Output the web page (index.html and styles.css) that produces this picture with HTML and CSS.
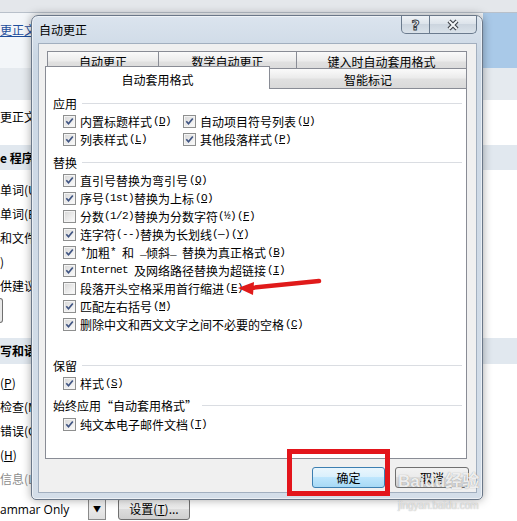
FILE: index.html
```html
<!DOCTYPE html>
<html lang="zh-CN">
<head>
  <meta charset="UTF-8">
  <title>自动更正</title>
  <link rel="stylesheet" href="styles.css">
</head>
<body>
  <!-- 背后的 Word 选项窗口（只露出左边一条） -->
  <div class="bg">
    <div class="bg-top"></div>
    <div class="bg-head"><span class="frag bg-link">更正文本和设置其格式的方式</span></div>
    <div class="bg-bar"></div>
    <div class="bg-intro"><span class="frag">更正文本时</span></div>
    <div class="bg-band b1"><span class="frag">e 程序中更正拼写时</span></div>
    <div class="bg-list">
      <div class="bg-line"><span class="frag">单词(U)</span></div>
      <div class="bg-line"><span class="frag">单词(B)</span></div>
      <div class="bg-line"><span class="frag">和文件地址(F)</span></div>
      <div class="bg-line"><span class="frag">)</span></div>
      <div class="bg-line"><span class="frag">供建议(I)</span></div>
    </div>
    <div class="bg-field"><span class="bg-edge"></span></div>
    <div class="bg-band b2"><span class="frag">写和语法时</span></div>
    <div class="bg-list l2">
      <div class="bg-line"><span class="frag">(<u>P</u>)</span></div>
      <div class="bg-line"><span class="frag">检查(M)</span></div>
      <div class="bg-line"><span class="frag">错误(G)</span></div>
      <div class="bg-line"><span class="frag">(<u>H</u>)</span></div>
      <div class="bg-line dim"><span class="frag">信息(L)</span></div>
    </div>
    <div class="bg-bottom">
      <span class="bg-combo">ammar Only</span>
      <span class="bg-drop">▼</span>
      <span class="bg-btn">设置(<u>T</u>)...</span>
    </div>
  </div>

  <!-- 自动更正 对话框 -->
  <div class="dlg">
    <div class="cap">
      <span class="cap-title">自动更正</span>
      <div class="cap-btns">
        <span class="cbtn help">?</span>
        <span class="cbtn close">
          <svg width="14" height="12" viewBox="0 0 14 12">
            <path d="M3 2 L11 10 M11 2 L3 10" stroke="#3b3f46" stroke-width="4.2" fill="none"/>
            <path d="M3 2 L11 10 M11 2 L3 10" stroke="#f4f6f8" stroke-width="2" fill="none"/>
          </svg>
        </span>
      </div>
    </div>

    <div class="client">
      <div class="tabrow back">
        <span class="tab t1">自动更正</span>
        <span class="tab t2">数学自动更正</span>
        <span class="tab t3">键入时自动套用格式</span>
      </div>
      <div class="tabrow front">
        <span class="tab sel">自动套用格式</span>
        <span class="tab t5">智能标记</span>
      </div>

      <div class="panel">
        <div class="grp">应用</div>
        <div class="line">
          <label class="opt c1"><span class="cb"><svg width="9" height="9" viewBox="0 0 9 9"><path d="M1.3 4.3 L3.5 6.8 L7.8 1.5" stroke="#3f5482" stroke-width="1.7" fill="none"/></svg></span>内置标题样式<span class="k">(<u>D</u>)</span></label>
          <label class="opt"><span class="cb"><svg width="9" height="9" viewBox="0 0 9 9"><path d="M1.3 4.3 L3.5 6.8 L7.8 1.5" stroke="#3f5482" stroke-width="1.7" fill="none"/></svg></span>自动项目符号列表<span class="k">(<u>U</u>)</span></label>
        </div>
        <div class="line">
          <label class="opt c1"><span class="cb"><svg width="9" height="9" viewBox="0 0 9 9"><path d="M1.3 4.3 L3.5 6.8 L7.8 1.5" stroke="#3f5482" stroke-width="1.7" fill="none"/></svg></span>列表样式<span class="k">(<u>L</u>)</span></label>
          <label class="opt"><span class="cb"><svg width="9" height="9" viewBox="0 0 9 9"><path d="M1.3 4.3 L3.5 6.8 L7.8 1.5" stroke="#3f5482" stroke-width="1.7" fill="none"/></svg></span>其他段落样式<span class="k">(<u>P</u>)</span></label>
        </div>

        <div class="grp g2">替换</div>
        <div class="line"><label class="opt"><span class="cb"><svg width="9" height="9" viewBox="0 0 9 9"><path d="M1.3 4.3 L3.5 6.8 L7.8 1.5" stroke="#3f5482" stroke-width="1.7" fill="none"/></svg></span>直引号替换为弯引号<span class="k">(<u>Q</u>)</span></label></div>
        <div class="line"><label class="opt"><span class="cb"><svg width="9" height="9" viewBox="0 0 9 9"><path d="M1.3 4.3 L3.5 6.8 L7.8 1.5" stroke="#3f5482" stroke-width="1.7" fill="none"/></svg></span>序号<span class="lat">(1st)</span>替换为上标<span class="k">(<u>O</u>)</span></label></div>
        <div class="line"><label class="opt"><span class="cb"></span>分数<span class="lat">(1/2)</span>替换为分数字符<span class="lat">(½)</span><span class="k">(<u>F</u>)</span></label></div>
        <div class="line"><label class="opt"><span class="cb"><svg width="9" height="9" viewBox="0 0 9 9"><path d="M1.3 4.3 L3.5 6.8 L7.8 1.5" stroke="#3f5482" stroke-width="1.7" fill="none"/></svg></span>连字符<span class="lat">(--)</span>替换为长划线<span class="lat">(—)</span><span class="k">(<u>Y</u>)</span></label></div>
        <div class="line"><label class="opt"><span class="cb"><svg width="9" height="9" viewBox="0 0 9 9"><path d="M1.3 4.3 L3.5 6.8 L7.8 1.5" stroke="#3f5482" stroke-width="1.7" fill="none"/></svg></span><span class="lat">*</span>加粗<span class="lat">*&nbsp;</span>和<span class="lat">&nbsp;_</span>倾斜<span class="lat">_&nbsp;</span>替换为真正格式<span class="k">(<u>B</u>)</span></label></div>
        <div class="line"><label class="opt"><span class="cb"><svg width="9" height="9" viewBox="0 0 9 9"><path d="M1.3 4.3 L3.5 6.8 L7.8 1.5" stroke="#3f5482" stroke-width="1.7" fill="none"/></svg></span><span class="lat">Internet&nbsp;</span>及网络路径替换为超链接<span class="k">(<u>I</u>)</span></label></div>
        <div class="line"><label class="opt"><span class="cb"></span>段落开头空格采用首行缩进<span class="k">(<u>E</u>)</span></label></div>
        <div class="line"><label class="opt"><span class="cb"><svg width="9" height="9" viewBox="0 0 9 9"><path d="M1.3 4.3 L3.5 6.8 L7.8 1.5" stroke="#3f5482" stroke-width="1.7" fill="none"/></svg></span>匹配左右括号<span class="k">(<u>M</u>)</span></label></div>
        <div class="line"><label class="opt"><span class="cb"><svg width="9" height="9" viewBox="0 0 9 9"><path d="M1.3 4.3 L3.5 6.8 L7.8 1.5" stroke="#3f5482" stroke-width="1.7" fill="none"/></svg></span>删除中文和西文文字之间不必要的空格<span class="k">(<u>C</u>)</span></label></div>

        <div class="grp g3">保留</div>
        <div class="line"><label class="opt"><span class="cb"><svg width="9" height="9" viewBox="0 0 9 9"><path d="M1.3 4.3 L3.5 6.8 L7.8 1.5" stroke="#3f5482" stroke-width="1.7" fill="none"/></svg></span>样式<span class="k">(<u>S</u>)</span></label></div>

        <div class="grp g4">始终应用“自动套用格式”</div>
        <div class="line l-last"><label class="opt"><span class="cb"><svg width="9" height="9" viewBox="0 0 9 9"><path d="M1.3 4.3 L3.5 6.8 L7.8 1.5" stroke="#3f5482" stroke-width="1.7" fill="none"/></svg></span>纯文本电子邮件文档<span class="k">(<u>T</u>)</span></label></div>
      </div>

      <div class="btns">
        <button class="btn ok">确定</button>
        <button class="btn cancel">取消</button>
      </div>
    </div>
  </div>

  <!-- 标注 -->
  <div class="redbox"></div>
  <svg class="arrow" width="100" height="26" viewBox="0 0 100 26">
    <path d="M20 13 L89 6" stroke="#e01a1a" stroke-width="4.5" stroke-linecap="round"/>
    <path d="M8 13 L24 7 L23 20 Z" fill="#e01a1a"/>
  </svg>
  <div class="mark">
    <div class="mark-logo">Baidu经验</div>
    <div class="mark-url">jingyan.baidu.com</div>
  </div>
</body>
</html>
```

FILE: styles.css
```css
*{
  box-sizing: border-box;
}
body{
  margin: 0; width: 517px; height: 521px; overflow: hidden; position: relative;
  font: 12px "Noto Sans CJK SC", "Liberation Sans", sans-serif; color: #000;
  background: #fff;
}
u{
  text-decoration: underline;
}

/* 背后窗口 */
.bg{
  white-space: nowrap;
}
.frag{
  display: inline-block; width: 31px; overflow: hidden; vertical-align: top;
}
.bg-top{
  height: 13px; background: #e4e7eb; border-bottom: 1px solid #b8c0ca;
}
.bg-head{
  height: 55px; padding-top: 10px; line-height: 14px;
  background: linear-gradient(to right, #f3f6f9 483px, #a9c9e8 483px);
}
.bg-link{
  color: #1f4e9c; text-decoration: underline;
}
.bg-bar{
  height: 32px; background: #e5eaef;
}
.bg-intro{
  height: 45px; padding-top: 10px; line-height: 14px;
}
.bg-band{
  font-weight: bold; background: #e1e8ef;
}
.b1{
  height: 25px; line-height: 25px;
}
.b2{
  height: 26px; line-height: 26px; margin-top: 15px;
}
.bg-list{
  margin-top: 8px;
}
.l2{
  margin-top: 7px;
}
.bg-line{
  height: 24px; line-height: 24px;
}
.dim{
  color: #8d8d8d;
}
.bg-field{
  height: 25px;
}
.bg-edge{
  display: block; width: 3px; height: 25px;
  border: 1px solid #707070; border-left: none; border-radius: 0 3px 3px 0;
  background: #e9e9e9;
}
.bg-bottom{
  display: flex; align-items: center; height: 24px; margin-top: 6px;
}
.bg-combo{
  width: 88px; font-family: "Open Sans", "Liberation Sans", sans-serif; font-size: 12px;
}
.bg-drop{
  width: 18px; height: 21px; display: flex; align-items: center; justify-content: center;
  border: 1px solid #8a8a8a; background: linear-gradient(#f4f4f4, #dedede);
  font-size: 8px; line-height: 1;
}
.bg-btn{
  margin-left: 12px; width: 72px; height: 22px; line-height: 20px; text-align: center;
  border: 1px solid #707070; border-radius: 3px;
  background: linear-gradient(#f2f2f2, #ebebeb 50%, #dddddd 50%, #cfcfcf);
}

/* 对话框 */
.dlg{
  position: absolute; left: 31px; top: 15px; width: 452px; height: 485px;
  display: flex; flex-direction: column;
  border: 1px solid #6a7788; border-radius: 7px 7px 5px 5px;
  background: linear-gradient(#dbe4ee, #ccd8e5 40px, #d4dee9);
  box-shadow: 0 0 10px rgba(0, 0, 0, 0.35), inset 0 0 0 1px rgba(255, 255, 255, 0.55);
}
.cap{
  height: 27px; flex: none; display: flex; align-items: flex-start; padding-left: 7px;
}
.cap-title{
  margin-top: 7px; line-height: 14px;
}
.cap-btns{
  margin-left: auto; margin-right: 5px; height: 18px; display: flex;
  border: 1px solid #6b7b8e; border-top: none; border-radius: 0 0 5px 5px; overflow: hidden;
  background: linear-gradient(#eef2f6, #dbe2ea 50%, #ccd5df 50%, #dae2ea);
}
.cbtn{
  display: flex; align-items: center; justify-content: center;
}
.help{
  width: 28px; border-right: 1px solid #6b7b8e;
  font: bold 14px "DejaVu Sans", sans-serif; color: #f2f4f6;
  -webkit-text-stroke: 1px #3b3f46;
}
.close{
  width: 46px;
}
.client{
  height: 450px; flex: none; margin: 0 5px 0 6px; padding-top: 7px;
  border: 1px solid #a2afbf; background: #f0f0f0;
}

/* 选项卡 */
.tabrow{
  display: flex;
}
.back{
  margin-left: 8px; height: 20px;
}
.front{
  margin-left: 6px; margin-top: -3px; height: 20px; position: relative; z-index: 1;
}
.tab{
  height: 20px; line-height: 20px; text-align: center;
  border: 1px solid #898c95; border-bottom: none; border-right: none;
  background: linear-gradient(#fafafa, #ececec 45%, #e0e0e0 55%, #d9d9d9);
}
.t1{ width: 111px; }
.t2{ width: 138px; }
.t3{ width: 171px; border-right: 1px solid #898c95; }
.sel{
  width: 225px; height: 23px; margin-top: -2px; padding-top: 1px; line-height: 23px;
  border-right: 1px solid #898c95; background: #fff;
}
.t5{
  width: 197px; line-height: 21px; border-left: none; border-right: 1px solid #898c95;
}
.panel{
  margin: 0 9px 0 6px; height: 371px; padding: 5px 4px 0 7px;
  border: 1px solid #898c95; background: #fff;
}
.grp{
  display: flex; align-items: center; height: 18px;
}
.grp::after{
  content: ""; flex: 1; margin-left: 5px; border-top: 1px solid #dadde2;
}
.g2{ margin-top: 5px; }
.g3{ margin-top: 23px; }
.g4{ margin-top: 4px; }
.l-last{ margin-top: 1px; }
.line{
  display: flex; height: 18px; padding-left: 10px;
}
.opt{
  display: flex; align-items: center; white-space: nowrap;
}
.c1{
  width: 120px;
}
.cb{
  width: 13px; height: 13px; margin-right: 4px; flex: none;
  display: flex; align-items: center; justify-content: center;
  border: 1px solid #8e8f8f; box-shadow: inset 0 0 0 1px #f4f4f4;
  background: linear-gradient(135deg, #d6d6d6, #fdfdfd);
}
.k, .lat{
  font: 11px "Liberation Mono", monospace; letter-spacing: -0.6px;
}
.k{
  margin-left: 1px;
}

/* 按钮 */
.btns{
  display: flex; justify-content: flex-end; gap: 10px; margin: 8px 7px 0 0;
}
.btn{
  height: 21px; padding: 0; font: inherit; color: #000;
  border: 1px solid #707070; border-radius: 3px;
  background: linear-gradient(#f2f2f2, #ebebeb 50%, #dddddd 50%, #cfcfcf);
}
.ok{
  width: 73px; border-color: #3c7fb1;
  background: linear-gradient(#eaf6fd, #d9f0fc 50%, #bee6fd 50%, #a7d9f5);
}
.cancel{
  width: 74px;
}

/* 标注 */
.redbox{
  position: absolute; left: 287px; top: 449px; width: 103px; height: 47px;
  border: 5px solid #e3151b;
}
.arrow{
  position: absolute; left: 230px; top: 275px;
}
.mark{
  position: absolute; left: 398px; top: 472px; white-space: nowrap;
  color: rgba(255, 255, 255, 0.85); text-shadow: 0 0 1px rgba(80, 80, 80, 0.6);
}
.mark-logo{
  font: bold 17px/20px "Liberation Sans", "Noto Sans CJK SC", sans-serif;
}
.mark-url{
  margin-top: 8px; font: 10px/12px "Liberation Sans", sans-serif; color: rgba(255, 255, 255, 0.7);
}
```
